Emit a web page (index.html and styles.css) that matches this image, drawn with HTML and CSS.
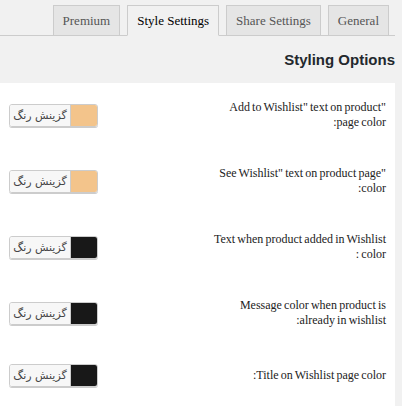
FILE: index.html
```html
<!DOCTYPE html>
<html lang="en">
<head>
<meta charset="utf-8">
<link rel="stylesheet" href="styles.css">
</head>
<body>
<div class="wrap">
  <nav class="tabs">
    <a class="tab">Premium</a>
    <a class="tab active">Style Settings</a>
    <a class="tab">Share Settings</a>
    <a class="tab">General</a>
  </nav>
  <h2 class="title">Styling Options</h2>
  <div class="panel">
    <div class="row">
      <div class="picker"><span class="pick-text" lang="fa">گزینش رنگ</span><span class="swatch peach"></span></div>
      <p class="label">"Add to Wishlist" text on product page color:</p>
    </div>
    <div class="row">
      <div class="picker"><span class="pick-text" lang="fa">گزینش رنگ</span><span class="swatch peach"></span></div>
      <p class="label">"See Wishlist" text on product page color:</p>
    </div>
    <div class="row">
      <div class="picker"><span class="pick-text" lang="fa">گزینش رنگ</span><span class="swatch dark"></span></div>
      <p class="label">Text when product added in Wishlist color :</p>
    </div>
    <div class="row">
      <div class="picker"><span class="pick-text" lang="fa">گزینش رنگ</span><span class="swatch dark"></span></div>
      <p class="label">Message color when product is already in wishlist:</p>
    </div>
    <div class="row">
      <div class="picker"><span class="pick-text" lang="fa">گزینش رنگ</span><span class="swatch dark"></span></div>
      <p class="label">Title on Wishlist page color:</p>
    </div>
  </div>
</div>
</body>
</html>
```
FILE: styles.css
```css
html, body {
  margin: 0;
  padding: 0;
  background: #f1f1f1;
}
.wrap {
  margin-right: 7px;
}
.tabs {
  display: flex;
  justify-content: flex-end;
  gap: 7px;
  padding: 5px 6px 0 0;
  border-bottom: 1px solid #ccc;
}
.tab {
  box-sizing: border-box;
  height: 31px;
  margin-bottom: -1px;
  padding: 0 9px;
  border: 1px solid #ccc;
  background: #e5e5e5;
  font-family: "Liberation Serif", "Times New Roman", serif;
  font-size: 13px;
  line-height: 29px;
  color: #555;
}
.tab.active {
  background: #f1f1f1;
  border-bottom-color: #f1f1f1;
  color: #000;
}
.title {
  margin: 14px 0 13px;
  font-family: "Liberation Sans", Arial, sans-serif;
  font-weight: bold;
  font-size: 15px;
  line-height: 20px;
  text-align: right;
  color: #23282d;
}
.panel {
  background: #fff;
  padding-bottom: 2px;
}
.row {
  display: flex;
  align-items: center;
  justify-content: space-between;
  padding: 17px 9px 19px 9px;
}
.label {
  margin: 0;
  width: 177px;
  direction: rtl;
  text-align: right;
  font-family: "Liberation Serif", "Times New Roman", serif;
  font-size: 12px;
  word-spacing: -0.8px;
  line-height: 15px;
  color: #222;
}
.picker {
  display: flex;
  box-sizing: border-box;
  width: 89px;
  height: 23px;
  border: 1px solid #ccc;
  border-radius: 3px;
  box-shadow: 0 1px 0 #ccc;
  overflow: hidden;
}
.pick-text {
  width: 60px;
  background: #f7f7f7;
  border-right: 1px solid #ccc;
  font-family: "DejaVu Sans", sans-serif;
  font-size: 11px;
  line-height: 21px;
  text-align: center;
  color: #444;
}
.swatch {
  flex: 1;
}
.peach {
  background: #f3c48b;
}
.dark {
  background: #181818;
}
```
